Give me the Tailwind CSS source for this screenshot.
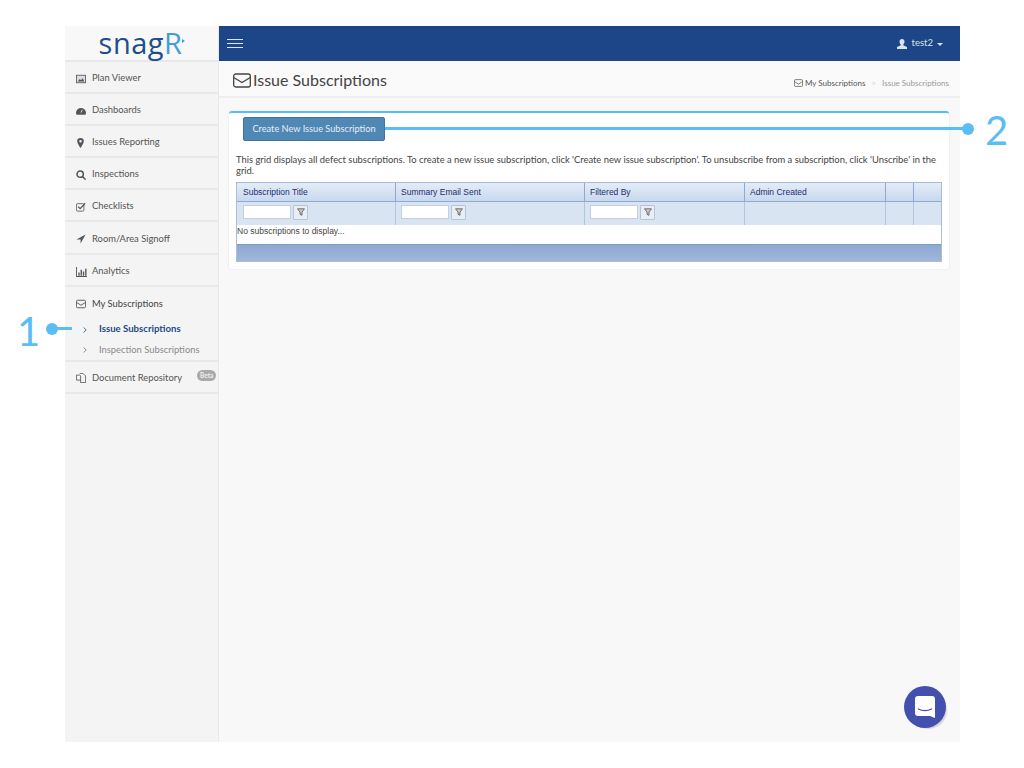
<!DOCTYPE html>
<html lang="en">

<head>
  <meta charset="UTF-8">
  <title>Issue Subscriptions</title>
  <script src="https://cdn.jsdelivr.net/npm/@tailwindcss/browser@4"></script>
</head>

<body class="relative h-[768px] w-[1024px] overflow-hidden bg-white font-['Lato','Open_Sans',sans-serif]">

  <div class="ml-[65px] mt-[26px] flex h-[716px] w-[895px]">

    <!-- sidebar -->
    <aside class="flex w-[154px] shrink-0 flex-col border-r border-[#e9e9e9] bg-[#f4f4f4] text-[9.400px] text-[#555]">
      <div class="flex h-[36px] items-center justify-center border-b-2 border-[#e8e8e8] bg-[#f8f8f8] pb-px pl-[1px]">
        <span class="text-[29px] leading-none tracking-[0.5px] text-[#1f4e8c] font-['Open_Sans',sans-serif]">snag<span class="text-[#3f9fd8]">R</span></span>
        <span class="mb-[4px] border-y-[2px] border-l-[3px] border-y-transparent border-l-[#3f9fd8]"></span>
      </div>
      <a class="flex h-[32px] items-center gap-[6px] border-b-2 border-[#e8e8e8] pl-[11px] pt-[3px]">
        <svg class="w-[10px] h-[10px]" viewBox="0 0 12 12"><rect x="0.5" y="1.5" width="11" height="9" fill="#ddd" stroke="#555"/><path d="M2 9l2.5-3 1.5 1.5 2-2.500L10 9z" fill="#555"/></svg>
        Plan Viewer
      </a>
      <a class="flex h-[32px] items-center gap-[6px] border-b-2 border-[#e8e8e8] pl-[11px] pt-[3px]">
        <svg class="w-[10px] h-[10px]" viewBox="0 0 12 12"><path d="M0 8a6 5.500 0 0 1 12 0c0 1.500-.5 2-1 2.500H1C.5 10 0 9.500 0 8z" fill="#555"/><path d="M6 8l1.500-3.500" stroke="#f3f3f3"/></svg>
        Dashboards
      </a>
      <a class="flex h-[32px] items-center gap-[8px] border-b-2 border-[#e8e8e8] pl-[12px] pt-[3px]">
        <svg class="w-[7px] h-[10px]" viewBox="0 0 8 12"><path fill-rule="evenodd" d="M4 0a4 4 0 0 1 4 4c0 2-2.500 6-4 8C2.500 10 0 6 0 4a4 4 0 0 1 4-4zm0 2.500a1.500 1.500 0 1 0 0 3 1.500 1.500 0 0 0 0-3z" fill="#555"/></svg>
        Issues Reporting
      </a>
      <a class="flex h-[32px] items-center gap-[6px] border-b-2 border-[#e8e8e8] pl-[11px] pt-[3px]">
        <svg class="w-[10px] h-[10px]" viewBox="0 0 12 12" fill="none" stroke="#555" stroke-width="1.800"><circle cx="5" cy="5" r="3.800"/><path d="M8 8l3.500 3.500"/></svg>
        Inspections
      </a>
      <a class="flex h-[32px] items-center gap-[6px] border-b-2 border-[#e8e8e8] pl-[11px] pt-[3px]">
        <svg class="w-[10px] h-[10px]" viewBox="0 0 12 12" fill="none" stroke="#555"><rect x="0.500" y="2" width="9" height="9" rx="1.500"/><path d="M2.500 5.500l2.500 2.500 6-6.500" stroke-width="1.500"/></svg>
        Checklists
      </a>
      <a class="flex h-[33px] items-center gap-[6px] border-b-2 border-[#e8e8e8] pl-[11px] pt-[3px]">
        <svg class="w-[10px] h-[10px]" viewBox="0 0 12 12"><path d="M11.500.5L5.500 11.500V6.500H.5z" fill="#555"/></svg>
        Room/Area Signoff
      </a>
      <a class="flex h-[32px] items-center gap-[5px] border-b-2 border-[#e8e8e8] pl-[11px] pt-[3px]">
        <svg class="w-[11px] h-[10px]" viewBox="0 0 12 11" fill="#555"><path d="M0 0h1v10h11v1H0zM2.500 6h1.500v3.500H2.500zM5 3h1.500v6.500H5zM7.500 5H9v4.500H7.500zM10 2h1.500v7.500H10z"/></svg>
        Analytics
      </a>
      <div class="border-b-2 border-[#e8e8e8]">
        <a class="flex h-[32px] items-center gap-[6px] pl-[11px] pt-[2px] text-[#444]">
          <svg class="w-[10px] h-[10px]" viewBox="0 0 12 12" fill="none" stroke="#444"><rect x="0.500" y="1.500" width="11" height="9" rx="1.500"/><path d="M.5 4l5.500 3.500L11.500 4"/></svg>
          My Subscriptions
        </a>
        <a class="flex h-[21px] items-center pl-[18px] text-[9.600px] font-bold text-[#1d4a8a]">
          <svg class="mr-[12px] w-[4px] h-[6px]" viewBox="0 0 4 6" fill="none" stroke="#3b6ea8"><path d="M.7.5L3.200 3 .7 5.500"/></svg>
          Issue Subscriptions
        </a>
        <a class="flex h-[20px] items-center pl-[18px] text-[#8a8a8a]">
          <svg class="mr-[12px] w-[4px] h-[6px]" viewBox="0 0 4 6" fill="none" stroke="#8a8a8a"><path d="M.7.5L3.200 3 .7 5.500"/></svg>
          Inspection Subscriptions
        </a>
      </div>
      <a class="flex h-[32px] items-center gap-[6px] border-b-2 border-[#e8e8e8] pl-[11px] pt-[2px]">
        <svg class="w-[10px] h-[10px]" viewBox="0 0 12 12" fill="none" stroke="#555"><path d="M.5 2.500h4l1 1v5h-5zM4.500.5h4l3 3v8h-6V8.500"/></svg>
        Document Repository
        <span class="absolute left-[197px] top-[370px] rounded-full bg-[#a9a9a9] px-[3px] text-[6.500px] leading-[11px] font-bold text-[#eee]">Beta</span>
      </a>
    </aside>

    <div class="flex min-w-0 flex-1 flex-col bg-[#f8f8f8]">
      <!-- top bar -->
      <header class="flex h-[35px] items-center justify-between bg-[#1d4688] pl-[8px] pr-[17px] text-[9.500px] text-[#d9e2ee]">
        <div class="flex w-[16px] flex-col gap-[2.500px]">
          <span class="h-[1.500px] bg-[#dfe6f0]"></span>
          <span class="h-[1.500px] bg-[#dfe6f0]"></span>
          <span class="h-[1.500px] bg-[#dfe6f0]"></span>
        </div>
        <div class="flex items-center">
          <svg class="mr-[5px] w-[10px] h-[10px]" viewBox="0 0 12 12" fill="#d9e2ee"><path d="M6 0c1.800 0 3 1.300 3 3.300 0 1.300-.6 2.500-1.500 3.200v1L12 9.500V12H0V9.500l4.500-2v-1C3.600 5.800 3 4.600 3 3.300 3 1.300 4.200 0 6 0z"/></svg>
          test2
          <span class="ml-[4px] mt-[1px] border-x-[3px] border-t-[3px] border-x-transparent border-t-[#d9e2ee]"></span>
        </div>
      </header>

      <!-- page heading -->
      <div class="flex h-[37px] items-center justify-between border-b-2 border-[#eeeeee] bg-[#fafafa] pl-[14px] pr-[11px] pt-[3px]">
        <h1 class="flex items-center gap-[2px] text-[16px] text-[#444]">
          <svg class="w-[18px] h-[15px]" viewBox="0 0 18 15" fill="none" stroke="#444" stroke-width="1.300"><rect x="0.700" y="1" width="16.600" height="13" rx="2"/><path d="M.7 4.500L9 9.500l8.300-5"/></svg>
          Issue Subscriptions
        </h1>
        <div class="mt-[5px] flex items-center text-[8px] text-[#999]">
          <svg class="mr-[2px] w-[9px] h-[8px]" viewBox="0 0 12 10" fill="none" stroke="#555"><rect x="0.500" y="0.500" width="11" height="9" rx="1.500"/><path d="M.5 3l5.500 3.500L11.500 3"/></svg>
          <span class="text-[#555]">My Subscriptions</span>
          <span class="mx-[6px] text-[#ccc]">&gt;</span>
          Issue Subscriptions
        </div>
      </div>

      <!-- content -->
      <div class="pl-[10px] pr-[11px] pt-[13px]">
        <div class="h-[158px] rounded-[3px] border-t-2 border-[#5bbcf0] bg-white shadow-[0_0_2px_#ddd]">
          <div class="pl-[14px] pt-[4px]">
            <button class="block h-[24px] w-[142px] rounded-[2px] border border-[#3f74a0] bg-[#4f87b5] text-[9.200px] text-[#e6eef5]">Create New Issue Subscription</button>
          </div>
          <p class="mx-[7px] mt-[13px] text-[9.400px] leading-[11px] text-[#444]">This grid displays all defect subscriptions. To create a new issue subscription, click 'Create new issue subscription'. To unsubscribe from a subscription, click 'Unscribe' in the grid.</p>
          <div class="mx-[7px] mt-[6px] border border-[#a9bcd8] font-['Liberation_Sans',sans-serif] text-[8.500px]">
            <div class="grid h-[19px] grid-cols-[159px_189px_160px_141px_28px_1fr] items-center border-b border-[#8eaad0] bg-gradient-to-b from-[#e4ecf7] to-[#c8d8ee] text-[#1a2f70]">
              <div class="flex h-full items-center border-r border-[#8eaad0] pl-[6px]">Subscription Title</div>
              <div class="flex h-full items-center border-r border-[#8eaad0] pl-[5px]">Summary Email Sent</div>
              <div class="flex h-full items-center border-r border-[#8eaad0] pl-[5px]">Filtered By</div>
              <div class="flex h-full items-center border-r border-[#8eaad0] pl-[5px]">Admin Created</div>
              <div class="h-full border-r border-[#8eaad0]"></div>
              <div></div>
            </div>
            <div class="grid h-[23px] grid-cols-[159px_189px_160px_141px_28px_1fr] items-center bg-[#d8e4f2]">
              <div class="flex h-full items-center gap-[2px] border-r border-[#b4c4da] pb-[3px] pl-[6px]">
                <span class="h-[14px] w-[48px] border border-[#c2d0e2] bg-white"></span>
                <span class="flex h-[15px] w-[15px] items-center justify-center rounded-[1px] border border-[#b5c4d8] bg-[#e9eef5]"><svg class="w-[8px] h-[8px]" viewBox="0 0 8 8" fill="#c9c9c9" stroke="#555" stroke-width="0.800"><path d="M.5.8h7L5 4v3.300L3 6.300V4z"/></svg></span>
              </div>
              <div class="flex h-full items-center gap-[2px] border-r border-[#b4c4da] pb-[3px] pl-[5px]">
                <span class="h-[14px] w-[48px] border border-[#c2d0e2] bg-white"></span>
                <span class="flex h-[15px] w-[15px] items-center justify-center rounded-[1px] border border-[#b5c4d8] bg-[#e9eef5]"><svg class="w-[8px] h-[8px]" viewBox="0 0 8 8" fill="#c9c9c9" stroke="#555" stroke-width="0.800"><path d="M.5.8h7L5 4v3.300L3 6.300V4z"/></svg></span>
              </div>
              <div class="flex h-full items-center gap-[2px] border-r border-[#b4c4da] pb-[3px] pl-[5px]">
                <span class="h-[14px] w-[48px] border border-[#c2d0e2] bg-white"></span>
                <span class="flex h-[15px] w-[15px] items-center justify-center rounded-[1px] border border-[#b5c4d8] bg-[#e9eef5]"><svg class="w-[8px] h-[8px]" viewBox="0 0 8 8" fill="#c9c9c9" stroke="#555" stroke-width="0.800"><path d="M.5.8h7L5 4v3.300L3 6.300V4z"/></svg></span>
              </div>
              <div class="h-full border-r border-[#b4c4da]"></div>
              <div class="h-full border-r border-[#b4c4da]"></div>
              <div></div>
            </div>
            <div class="h-[19px] bg-white text-[#444] leading-[12px]">No subscriptions to display...</div>
            <div class="h-[17px] border-t border-[#7f9cc8] bg-gradient-to-b from-[#8ea8d2] to-[#a0b6da]"></div>
          </div>
        </div>
      </div>
    </div>
  </div>

  <!-- chat bubble -->
  <div class="absolute left-[904px] top-[686px] flex size-[42px] items-center justify-center rounded-full bg-[#4450ae] shadow-[3px_3px_1px_-2px_#d4d4d4]">
    <svg class="w-[20px] h-[22px]" viewBox="0 0 20 22"><path d="M3 0h14a3 3 0 0 1 3 3v19l-5-2H3a3 3 0 0 1-3-3V3a3 3 0 0 1 3-3z" fill="#fff"/><path d="M3.500 13c3.500 2.200 9.500 2.200 13 0" fill="none" stroke="#4450ae" stroke-width="1.300" stroke-linecap="round"/></svg>
  </div>

  <!-- annotation 1 -->
  <span class="absolute left-[17px] top-[309px] text-[40px] leading-[44px] text-[#5bbdf5]">1</span>
  <div class="absolute left-[46px] top-[323px] size-[12px] rounded-full bg-[#5bbdf5]"></div>
  <div class="absolute left-[52px] top-[327px] h-[3px] w-[20px] bg-[#5bbdf5]"></div>

  <!-- annotation 2 -->
  <div class="absolute left-[385px] top-[127px] h-[3px] w-[580px] bg-[#5bbdf5]"></div>
  <div class="absolute left-[962px] top-[123px] size-[12px] rounded-full bg-[#5bbdf5]"></div>
  <span class="absolute left-[985px] top-[108px] text-[40px] leading-[44px] text-[#5bbdf5]">2</span>

</body>

</html>
